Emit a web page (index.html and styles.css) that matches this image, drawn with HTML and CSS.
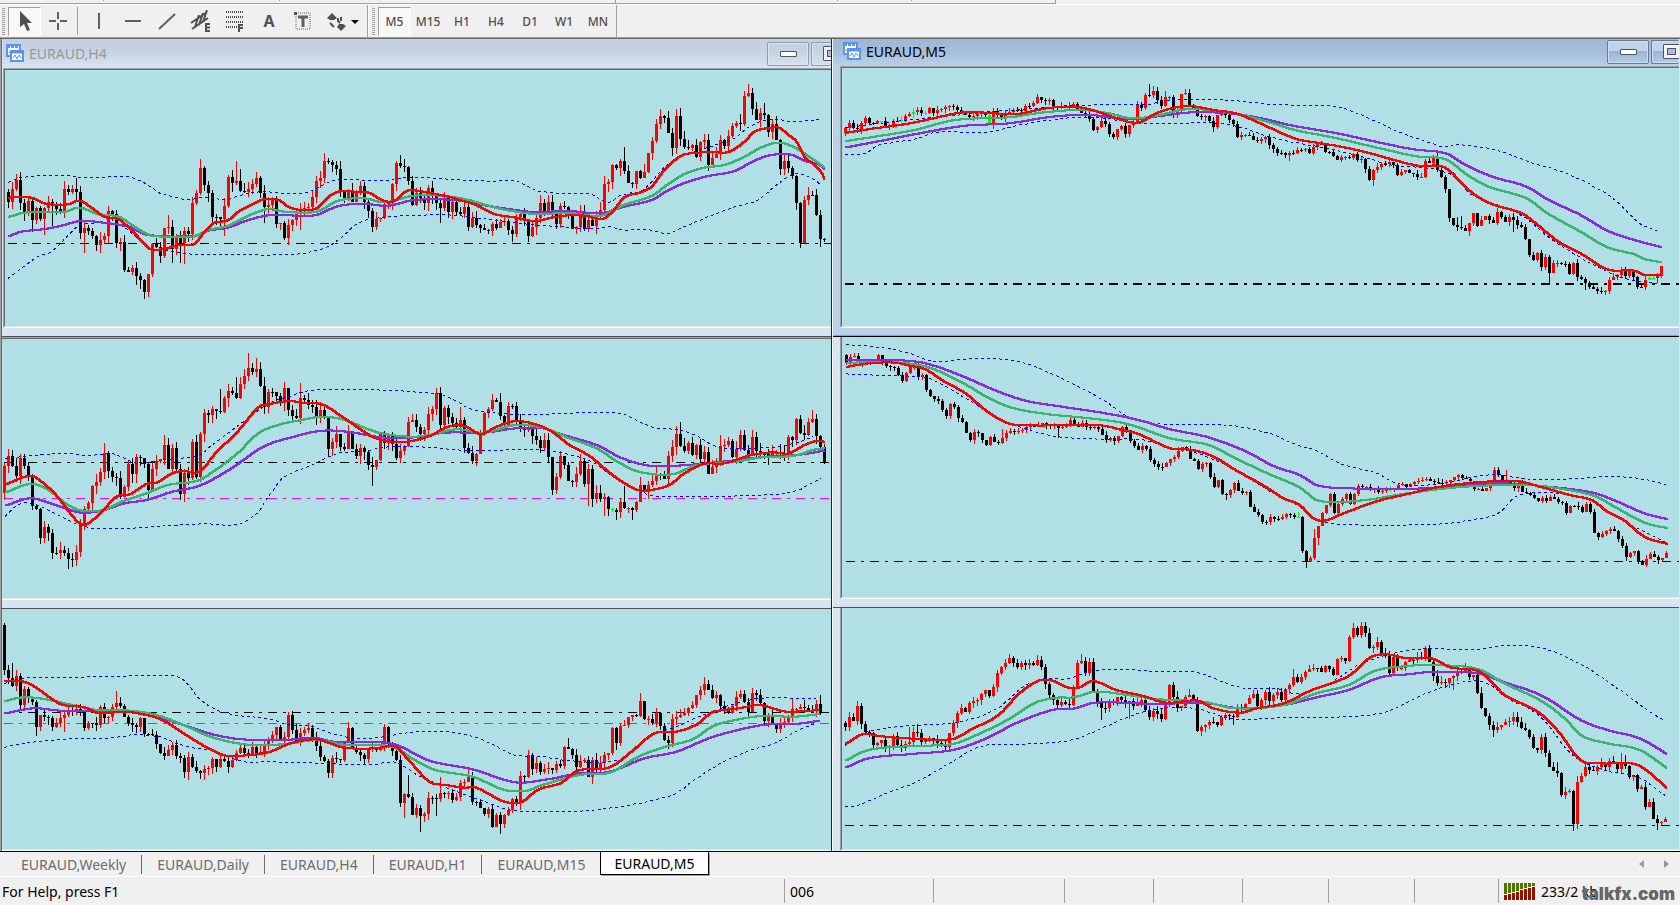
FILE: index.html
```html
<!DOCTYPE html>
<html lang="en">
<head>
    <meta charset="UTF-8">
    <meta name="viewport" content="width=device-width, initial-scale=1.0">
    <title>EURAUD,M5</title>
    <link rel="stylesheet" href="styles.css">
</head>
<body>
    <div class="strip">
        <span class="part part-a"></span>
        <span class="part part-b"></span>
        <span class="part part-c"></span>
        <span class="part part-d"></span>
        <span class="part part-e"></span>
    </div>

    <div class="toolbar">
        <div class="group">
            <span class="grip"></span>
            <button class="tool active" aria-label="Cursor">
                <svg width="20" height="20"><path d="M5 0v16l4-3 3 7 3-1-3-7h5z" fill="#505050"/></svg>
            </button>
            <button class="tool" aria-label="Crosshair">
                <svg width="20" height="20"><path d="M10 1v7M10 12v7M1 10h7M12 10h7" stroke="#606060" stroke-width="2"/></svg>
            </button>
            <span class="sep"></span>
            <button class="tool" aria-label="Vertical line">
                <svg width="20" height="20"><path d="M10 2v16" stroke="#606060" stroke-width="2"/></svg>
            </button>
            <button class="tool" aria-label="Horizontal line">
                <svg width="20" height="20"><path d="M2 10h16" stroke="#606060" stroke-width="2"/></svg>
            </button>
            <button class="tool" aria-label="Trendline">
                <svg width="20" height="20"><path d="M2 18L18 3" stroke="#606060" stroke-width="2"/></svg>
            </button>
            <button class="tool" aria-label="Equidistant channel">
                <svg width="22" height="22">
                    <path d="M1 13L17 2M2 19L18 8M5 17L9 5M9 15L13 3M13 12L17 0" stroke="#505050" stroke-width="2" fill="none"/>
                    <path d="M20 14h-4v7h4M16 17.500h4" stroke="#505050" stroke-width="2" fill="none"/>
                </svg>
            </button>
            <button class="tool" aria-label="Fibonacci retracement">
                <svg width="22" height="22">
                    <path d="M2 2h17M2 7h17M2 12h17M2 17h11" stroke="#505050" stroke-width="2" stroke-dasharray="1 1"/>
                    <path d="M19 15h-4v7M15 18h4" stroke="#505050" stroke-width="2" fill="none"/>
                </svg>
            </button>
            <button class="tool letter" aria-label="Text">A</button>
            <button class="tool" aria-label="Text label">
                <svg width="20" height="20">
                    <rect x="3" y="2" width="14" height="16" fill="none" stroke="#606060" stroke-dasharray="1 1"/>
                    <path d="M1 1h3v3H1z" fill="#505050"/>
                    <path d="M5 6h10M10 6v10" stroke="#606060" stroke-width="3"/>
                </svg>
            </button>
            <button class="tool wide" aria-label="Arrows">
                <svg width="32" height="20">
                    <path d="M5 2l5 5-3 2H3L0 7zM12 13h4l3 2-5 5-4-4z" fill="#505050"/>
                    <path d="M3 12l4 4M11 7v3l2 2M14 6v4" stroke="#505050" stroke-width="2" fill="none"/>
                    <path d="M24 9h8l-4 4z" fill="#000"/>
                </svg>
            </button>
        </div>
        <div class="group">
            <span class="grip"></span>
            <button class="tool period active">M5</button>
            <button class="tool period">M15</button>
            <button class="tool period">H1</button>
            <button class="tool period">H4</button>
            <button class="tool period">D1</button>
            <button class="tool period">W1</button>
            <button class="tool period">MN</button>
        </div>
    </div>

    <main class="workspace">
        <div class="column left">
            <section class="window titled">
                <header class="title">
                    <svg class="logo" width="19" height="19">
                        <rect x="1" y="1" width="13" height="11" fill="#fff" stroke="#5b93f5" stroke-width="2"/>
                        <path d="M1 2h14" stroke="#5b93f5" stroke-width="4" stroke-dasharray="3 1"/>
                        <path d="M3 9l2-3 2 3" stroke="#5b93f5" fill="none"/>
                        <rect x="5" y="7" width="12" height="10" fill="#fff" stroke="#5b93f5" stroke-width="2"/>
                        <path d="M4 8h14" stroke="#5b93f5" stroke-width="3"/>
                        <path d="M7 14l2-3 2 4 2-4 2 3" stroke="#5b93f5" fill="none"/>
                    </svg>
                    <span class="name">EURAUD,H4</span>
                    <button class="winbtn" aria-label="Minimize"><span class="min"></span></button>
                    <button class="winbtn cut" aria-label="Maximize"><span class="max"></span></button>
                </header>
                <div class="client"><svg class="chart" id="chart-h4"></svg></div>
            </section>
            <section class="window">
                <div class="client"><svg class="chart" id="chart-daily"></svg></div>
            </section>
            <section class="window">
                <div class="client"><svg class="chart" id="chart-weekly"></svg></div>
            </section>
        </div>
        <div class="column right">
            <section class="window titled focused">
                <header class="title">
                    <svg class="logo" width="19" height="19">
                        <rect x="1" y="1" width="13" height="11" fill="#fff" stroke="#5b93f5" stroke-width="2"/>
                        <path d="M1 2h14" stroke="#5b93f5" stroke-width="4" stroke-dasharray="3 1"/>
                        <path d="M3 9l2-3 2 3" stroke="#5b93f5" fill="none"/>
                        <rect x="5" y="7" width="12" height="10" fill="#fff" stroke="#5b93f5" stroke-width="2"/>
                        <path d="M4 8h14" stroke="#5b93f5" stroke-width="3"/>
                        <path d="M7 14l2-3 2 4 2-4 2 3" stroke="#5b93f5" fill="none"/>
                    </svg>
                    <span class="name">EURAUD,M5</span>
                    <button class="winbtn" aria-label="Minimize"><span class="min"></span></button>
                    <button class="winbtn cut" aria-label="Maximize"><span class="max"></span></button>
                </header>
                <div class="client"><svg class="chart" id="chart-m5"></svg></div>
            </section>
            <section class="window">
                <div class="client"><svg class="chart" id="chart-m15"></svg></div>
            </section>
            <section class="window">
                <div class="client"><svg class="chart" id="chart-h1"></svg></div>
            </section>
        </div>
    </main>

    <nav class="tabs">
        <button class="tab">EURAUD,Weekly</button>
        <button class="tab">EURAUD,Daily</button>
        <button class="tab">EURAUD,H4</button>
        <button class="tab">EURAUD,H1</button>
        <button class="tab">EURAUD,M15</button>
        <button class="tab current">EURAUD,M5</button>
        <span class="scroll">
            <button class="arrow" aria-label="Scroll left"><svg width="5" height="8"><path d="M5 0v8L0 4z" fill="#999"/></svg></button>
            <button class="arrow" aria-label="Scroll right"><svg width="5" height="8"><path d="M0 0v8l5-4z" fill="#999"/></svg></button>
        </span>
    </nav>

    <footer class="status">
        <span class="cell">For Help, press F1</span>
        <span class="cell">006</span>
        <span class="cell"></span>
        <span class="cell"></span>
        <span class="cell"></span>
        <span class="cell"></span>
        <span class="cell"></span>
        <span class="cell"></span>
        <span class="cell">
            <svg width="32" height="17">
                <path d="M0 0h3v11H0zM4 0h3v10H4zM8 0h3v9H8zM12 0h3v8h-3zM16 0h3v6h-3zM20 0h3v5h-3zM24 0h3v4h-3zM28 0h3v3h-3z" fill="#4f7500"/>
                <path d="M0 12h3v5H0zM4 11h3v6H4zM8 10h3v7H8zM12 9h3v8h-3zM16 7h3v10h-3zM20 6h3v11h-3zM24 5h3v12h-3zM28 4h3v13h-3z" fill="#8e1600"/>
            </svg>
            233/2 kb
        </span>
        <span class="watermark">talkfx.com</span>
    </footer>

    <script src="charts.js"></script>
</body>
</html>
```

FILE: styles.css
```css
* {
    margin: 0;
    padding: 0;
    box-sizing: border-box;
}

body {
    height: 100vh;
    display: flex;
    flex-direction: column;
    overflow: hidden;
    background: #f0f0f0;
    color: #000;
    font-family: "Noto Sans", "Open Sans", sans-serif;
    font-size: 14px;
}

button {
    border: none;
    background: none;
    font: inherit;
    color: inherit;
}

/* bottom edge of the upper toolbar */
.strip {
    height: 4px;
    width: 63%;
    max-width: 1056px;
    display: flex;
    border-right: 1px solid #a0a0a0;
    border-bottom: 1px solid #a0a0a0;
}

.part {
    height: 1px;
    border-right: 1px solid #a0a0a0;
}

.part-a { width: 104px; }
.part-b { width: 176px; }
.part-c { width: 336px; height: 3px; }
.part-d { width: 222px; }
.part-e { width: 74px; }

.toolbar {
    height: 33px;
    display: flex;
    border-top: 1px solid #fff;
}

.group {
    display: flex;
    align-items: center;
    padding: 1px 1px 1px 2px;
    border-right: 1px solid #a0a0a0;
}

.group + .group {
    border-left: 1px solid #fff;
    padding-left: 3px;
}

.grip {
    width: 3px;
    height: 27px;
    margin-right: 3px;
    background: repeating-linear-gradient(#a0a0a0 0 1px, #f0f0f0 1px 2px);
}

.tool {
    width: 34px;
    height: 29px;
    display: flex;
    align-items: center;
    justify-content: center;
    color: #505050;
}

.tool.active {
    width: 33px;
    background: #f8f8f8;
    border: 1px solid;
    border-color: #a0a0a0 #fff #fff #a0a0a0;
}

.tool.wide {
    width: 46px;
}

.letter {
    font-size: 16px;
    font-weight: 700;
}

.period {
    font-size: 12px;
    font-weight: 500;
}

.sep {
    width: 1px;
    height: 28px;
    margin: 0 4px 0 2px;
    background: #a0a0a0;
}

.workspace {
    flex: 1;
    min-height: 0;
    display: grid;
    grid-template-columns: minmax(0, 832fr) minmax(0, 848fr);
    border-top: 1px solid #a0a0a0;
    box-shadow: inset 0 1px #696969;
    padding-top: 1px;
}

.column {
    display: grid;
    min-height: 0;
}

.left {
    grid-template-rows: minmax(0, 297fr) minmax(0, 272fr) minmax(0, 243fr);
    border-left: 1px solid #a0a0a0;
    border-right: 1px solid #222;
}

.right {
    grid-template-rows: minmax(0, 298fr) minmax(0, 270fr) minmax(0, 244fr);
    border-left: 1px solid #fff;
    border-right: 1px solid #e3e3e3;
}

.window {
    display: flex;
    flex-direction: column;
    min-height: 0;
    background: #d7e4f2;
    padding-bottom: 8px;
}

.left .window {
    border-left: 1px solid #696969;
    border-top: 1px solid #505050;
}

.left .titled {
    border-top: none;
    padding-left: 1px;
}

.right .window {
    padding-left: 7px;
}

.right .window:last-child {
    border-top: 1px solid #505050;
}

.right .focused {
    background: #b9d1ea;
    padding-bottom: 8px;
    border-bottom: 1px solid #000;
    box-shadow: inset 0 -1px #35c5dc;
}

.window:last-child {
    padding-bottom: 0;
}

.title {
    height: 29px;
    display: flex;
    align-items: center;
    background: linear-gradient(#c3d0df, #c5d2e1 40%, #d7e4f2);
    color: #999;
}

.focused .title {
    height: 27px;
    margin-left: -7px;
    padding: 0 0 2px 7px;
    background: linear-gradient(#9db8d6, #a2bcda 40%, #b9d1ea);
    color: #000;
}

.logo {
    margin: 0 4px 0 3px;
}

.name {
    flex: 1;
}

.winbtn {
    width: 42px;
    height: 24px;
    margin-right: 2px;
    display: flex;
    align-items: center;
    justify-content: center;
    border: 1px solid #8a9bb8;
    border-radius: 2px;
    box-shadow: inset 0 0 0 1px #dde7f3;
}

.focused .winbtn {
    background: linear-gradient(#bfd3e9 45%, #98b4d3 45%, #b3cce7);
    border-color: #64799b;
    box-shadow: inset 0 0 0 1px #cfe0f2;
}

.winbtn.cut {
    width: 20px;
    margin-right: 0;
    justify-content: flex-start;
    padding-left: 11px;
    overflow: hidden;
    border-right: none;
}

.focused .winbtn.cut {
    width: 28px;
}

.min {
    width: 17px;
    height: 6px;
    background: #fff;
    border: 1px solid #4c5468;
    border-radius: 1px;
}

.max {
    flex: none;
    width: 17px;
    height: 15px;
    border: 1px solid #4c5468;
    border-radius: 1px;
    background: #a8bfdb;
    box-shadow: inset 0 0 0 3px #f3f3f3, inset 0 0 0 4px #4c5468;
}

/* sunken frame round each chart */
.client {
    flex: 1;
    min-height: 0;
    display: flex;
    border-bottom: 1px solid #fff;
}

.titled .client {
    border-top: 1px solid #a0a0a0;
    border-left: 1px solid #a0a0a0;
}

.right .client {
    border-left: 1px solid #a0a0a0;
}

.chart {
    flex: 1;
    width: 100%;
    min-width: 0;
    height: 100%;
    background: #b0e0e6;
    border-bottom: 1px solid #e3e3e3;
    shape-rendering: crispEdges;
}

.titled .chart {
    border-top: 1px solid #696969;
    border-left: 1px solid #696969;
}

.right .chart {
    border-left: 1px solid #696969;
}

.left .window:nth-child(2) .client {
    border-top: 1px solid #a0a0a0;
}

.left .window:nth-child(2) .chart {
    border-top: 1px solid #696969;
}

.tabs {
    height: 26px;
    display: flex;
    align-items: center;
    padding-left: 6px;
    border-top: 1px solid #000;
    border-bottom: 1px solid #fff;
    color: #6d6d6d;
}

.tab {
    height: 19px;
    line-height: 17px;
    padding: 0 15px;
    border-right: 1px solid #6d6d6d;
    white-space: nowrap;
}

.tab:nth-child(5) {
    border-right: none;
}

.tab.current {
    align-self: flex-start;
    height: 23px;
    line-height: 21px;
    padding: 0 13px;
    background: #fff;
    color: #000;
    border: 1px solid #000;
    border-top: none;
    box-shadow: 1px 1px #a0a0a0;
}

.scroll {
    margin-left: auto;
    display: flex;
    gap: 20px;
    padding-right: 11px;
}

.arrow {
    display: flex;
}

.status {
    position: relative;
    height: 28px;
    display: grid;
    grid-template-columns: 784fr 149fr 131fr 89fr 89fr 86fr 86fr 84fr 182fr;
    align-items: center;
    padding: 2px 0;
}

.cell {
    height: 24px;
    display: flex;
    align-items: center;
    gap: 5px;
    padding-left: 5px;
    border-left: 1px solid #a0a0a0;
    white-space: nowrap;
}

.cell:first-child {
    border-left: none;
    padding-left: 2px;
}

.watermark {
    position: absolute;
    right: 5px;
    bottom: 1px;
    font-family: Inter, sans-serif;
    font-size: 17px;
    font-weight: 900;
    color: #666;
}
```

FILE: charts.js
```javascript
// Each series is a flat list: x, y, x, y ...
// dx/dy move the series into the chart, sx is units per pixel.
const STEP = 4;

const COLORS = {
    up: '#ff0000',
    down: '#000000',
    doji: '#00ff00',
    red: '#ff0000',
    green: '#3cb371',
    purple: '#8a2be2',
    band: '#0000ff'
};

const charts = [
    {
        id: 'chart-h4', sx: 3, dx: 5, dy: 10, first: 3, wick: 26, open: 395,
        levels: [[550, '#000', 1]],
        candles: [
            25,425, 37,388, 49,360, 61,430, 73,458, 85,423, 97,480, 109,445, 121,478, 133,443, 145,427, 157,437, 169,448, 181,456,
            193,388, 205,395, 217,388, 229,397, 241,518, 253,503, 265,513, 277,528, 289,555, 301,541, 313,529, 325,453, 337,462,
            349,550, 361,546, 373,630, 385,635, 397,624, 409,648, 421,661, 433,696, 445,642, 457,552, 469,562, 481,588, 493,504,
            505,500, 517,566, 529,532, 541,550, 553,513, 565,522, 577,430, 589,400, 601,324, 613,376, 625,400, 637,470, 649,472,
            661,478, 673,438, 685,352, 697,370, 709,363, 721,392, 733,396, 745,387, 757,373, 769,354, 781,398, 793,440, 805,436,
            817,421, 829,491, 841,490, 853,533, 865,495, 877,480, 889,460, 901,450, 913,445, 925,440, 937,411, 949,363, 961,354,
            973,303, 985,306, 997,315, 1009,326, 1021,395, 1033,417, 1045,396, 1057,425, 1069,396, 1081,378, 1093,425, 1105,452,
            1117,500, 1129,478, 1141,474, 1153,432, 1165,430, 1177,373, 1189,310, 1201,318, 1213,322, 1225,362, 1237,435,
            1249,400, 1261,415, 1273,430, 1285,385, 1297,408, 1309,428, 1321,443, 1333,415, 1345,457, 1357,425, 1369,455,
            1381,462, 1393,441, 1405,500, 1417,473, 1429,494, 1441,503, 1453,510, 1465,514, 1477,491, 1489,503, 1501,485,
            1513,482, 1525,510, 1537,522, 1549,470, 1561,462, 1573,482, 1585,527, 1597,500, 1609,473, 1621,428, 1633,452,
            1645,426, 1657,450, 1669,492, 1681,438, 1693,440, 1705,464, 1717,507, 1729,502, 1741,457, 1753,507, 1765,480,
            1777,498, 1789,465, 1801,450, 1813,373, 1825,367, 1837,315, 1849,324, 1861,303, 1873,333, 1885,368, 1897,372,
            1909,333, 1921,353, 1933,336, 1945,280, 1957,243, 1969,193, 1981,168, 1993,173, 2005,218, 2017,264, 2029,168,
            2041,236, 2053,262, 2065,264, 2077,255, 2089,290, 2101,246, 2113,240, 2125,315, 2137,293, 2149,281, 2161,240,
            2173,258, 2185,228, 2197,198, 2209,188, 2221,193, 2233,108, 2245,99, 2257,147, 2269,179, 2281,158, 2293,166,
            2305,215, 2317,192, 2329,240, 2341,327, 2353,303, 2365,324, 2377,347, 2389,428, 2401,549, 2413,420, 2425,405,
            2437,405, 2449,464, 2461,537, 2473,537
        ],
        spikes: [97,515, 133,525, 157,503, 253,580, 229,355, 445,710, 505,465, 517,608, 541,608, 553,612, 601,297, 673,528, 709,303, 721,328, 793,488, 901,510, 1201,286, 1321,490, 1537,545, 1873,262, 1981,153, 2005,153, 2041,147, 2245,72, 2293,130, 2401,563],
        lines: {
            purple: [25,528, 60,515, 130,507, 180,497, 240,483, 320,490, 380,500, 440,525, 580,527, 620,512, 680,502, 740,480, 810,465, 940,466, 1010,438, 1090,432, 1160,437, 1240,420, 1360,420, 1430,433, 1520,447, 1600,456, 1700,453, 1800,460, 1860,442, 1950,420, 2000,390, 2060,365, 2120,348, 2200,333, 2260,302, 2310,285, 2370,284, 2410,302, 2450,313, 2473,330],
            green: [25,470, 70,458, 130,455, 190,455, 235,443, 290,463, 350,470, 400,500, 445,525, 500,530, 575,530, 620,510, 680,497, 740,467, 800,447, 850,455, 945,455, 1010,422, 1090,415, 1150,427, 1240,407, 1330,408, 1400,420, 1490,445, 1600,462, 1700,459, 1800,467, 1860,437, 1950,408, 2000,372, 2050,342, 2110,323, 2170,315, 2230,290, 2280,262, 2330,248, 2380,262, 2430,295, 2473,324],
            red: [25,413, 60,410, 95,415, 130,430, 170,434, 205,432, 235,422, 270,443, 310,470, 350,478, 385,505, 420,542, 445,566, 490,567, 530,555, 575,553, 605,520, 635,490, 680,480, 710,455, 750,435, 790,417, 830,420, 865,442, 900,450, 945,445, 985,408, 1020,393, 1060,395, 1100,398, 1145,422, 1180,422, 1215,393, 1240,391, 1290,400, 1340,410, 1380,422, 1420,433, 1480,462, 1540,472, 1600,483, 1650,473, 1700,466, 1750,467, 1800,477, 1830,458, 1870,412, 1915,398, 1950,380, 1990,330, 2040,287, 2090,278, 2130,276, 2180,276, 2230,245, 2260,215, 2300,204, 2335,204, 2360,225, 2385,245, 2410,290, 2440,315, 2460,338, 2473,364]
        },
        bands: [
            [25,366, 70,350, 170,344, 260,352, 385,349, 440,372, 480,398, 560,417, 620,410, 670,418, 740,400, 790,393, 860,400, 930,393, 1000,360, 1160,360, 1220,350, 1380,358, 1480,362, 1550,362, 1610,390, 1700,400, 1775,402, 1820,426, 1870,402, 1930,388, 1990,325, 2040,290, 2110,265, 2200,235, 2260,192, 2320,176, 2380,183, 2473,175],
            [25,655, 110,590, 160,570, 230,498, 250,490, 350,490, 400,520, 440,560, 490,568, 560,580, 650,582, 870,582, 960,568, 1020,535, 1070,490, 1150,470, 1250,465, 1330,462, 1450,475, 1530,485, 1600,493, 1680,498, 1790,505, 1830,498, 1860,508, 1940,508, 2000,518, 2050,500, 2200,440, 2270,420, 2340,365, 2385,340, 2440,355, 2473,384]
        ]
    },
    {
        id: 'chart-daily', sx: 1.867, dx: 2, dy: 9, first: 2, wick: 26, open: 490,
        levels: [[397, '#000', 1], [505, '#ff00ff', 1]],
        candles: [
            9,408, 17,378, 24,408, 32,437, 39,385, 47,408, 54,438, 62,527, 70,536, 77,624, 84,592, 91,608, 99,670, 107,670, 113,660,
            121,668, 128,688, 135,690, 143,665, 150,588, 158,536, 165,520, 172,468, 180,456, 187,426, 195,368, 202,423, 210,442,
            218,445, 225,500, 232,472, 240,402, 247,432, 255,380, 262,385, 270,402, 277,480, 285,418, 292,392, 300,388, 307,345,
            314,416, 322,354, 330,416, 337,492, 345,430, 352,445, 360,336, 367,440, 374,312, 382,250, 390,256, 397,238, 404,244,
            412,245, 419,205, 427,184, 434,190, 442,205, 449,162, 456,138, 464,115, 471,125, 479,118, 487,168, 494,232, 501,187,
            509,187, 516,198, 524,220, 531,175, 539,240, 546,258, 553,264, 561,205, 568,210, 576,225, 583,232, 591,264, 598,240,
            606,262, 613,358, 620,336, 628,312, 636,350, 643,356, 650,310, 658,358, 665,378, 673,355, 681,366, 688,404, 695,412,
            703,390, 710,312, 718,340, 725,312, 733,342, 740,384, 748,362, 755,348, 762,275, 770,270, 777,292, 785,312, 792,300,
            800,252, 807,238, 815,190, 822,286, 830,235, 837,262, 845,280, 852,292, 860,270, 867,354, 874,368, 882,392, 890,372,
            897,310, 904,250, 912,236, 919,210, 926,215, 934,258, 942,285, 949,228, 957,228, 964,270, 971,290, 979,300, 986,298,
            994,318, 1001,330, 1009,355, 1016,330, 1024,380, 1031,480, 1039,440, 1046,378, 1054,404, 1061,452, 1069,455, 1076,432,
            1084,394, 1091,462, 1098,416, 1106,508, 1113,490, 1121,508, 1128,500, 1136,538, 1143,540, 1150,545, 1158,515,
            1166,535, 1173,533, 1181,540, 1188,515, 1195,466, 1203,486, 1210,465, 1218,452, 1225,432, 1233,434, 1240,446,
            1247,378, 1255,352, 1263,312, 1270,348, 1277,362, 1285,338, 1292,375, 1300,345, 1308,388, 1315,366, 1322,432,
            1330,410, 1337,398, 1345,348, 1352,345, 1360,332, 1367,380, 1375,358, 1382,315, 1390,360, 1398,376, 1405,320,
            1412,362, 1420,372, 1428,372, 1435,382, 1443,368, 1450,365, 1458,370, 1465,378, 1472,320, 1480,330, 1487,268,
            1494,310, 1502,316, 1509,276, 1517,268, 1524,318, 1532,352, 1539,400
        ],
        spikes: [24,360, 128,716, 195,340, 277,512, 307,316, 412,178, 442,142, 464,69, 479,84, 561,160, 695,467, 815,186, 860,232, 919,192, 934,190, 1098,528, 1128,557, 1158,563, 1166,468, 1181,570, 1270,277, 1345,315, 1517,240],
        doji: [1143],
        lines: {
            purple: [9,526, 55,505, 100,525, 150,548, 190,540, 230,520, 270,510, 320,485, 370,467, 430,415, 490,350, 550,318, 600,302, 650,306, 700,320, 750,325, 830,308, 900,308, 960,295, 1010,295, 1050,315, 1110,345, 1160,385, 1210,407, 1260,407, 1330,398, 1430,380, 1490,374, 1539,361],
            green: [9,486, 55,462, 85,478, 120,520, 150,542, 190,540, 230,512, 270,490, 310,465, 365,452, 400,420, 440,370, 480,310, 520,283, 560,270, 600,260, 640,270, 700,306, 760,320, 800,315, 850,298, 900,308, 960,285, 1010,293, 1060,325, 1110,355, 1150,395, 1190,425, 1250,433, 1300,405, 1370,395, 1420,382, 1480,377, 1520,358, 1539,355],
            red: [9,462, 55,437, 75,455, 105,500, 135,562, 150,583, 162,580, 190,540, 215,500, 240,492, 270,462, 290,458, 320,430, 340,423, 370,425, 400,370, 440,305, 480,232, 500,222, 540,213, 560,218, 600,224, 640,265, 700,325, 755,335, 800,318, 835,290, 865,288, 895,312, 925,290, 960,273, 1000,285, 1030,308, 1060,345, 1100,380, 1140,435, 1180,475, 1200,482, 1245,466, 1275,430, 1310,402, 1350,400, 1400,375, 1440,367, 1470,370, 1500,345, 1524,332, 1539,336]
        },
        bands: [
            [9,384, 60,375, 130,368, 160,376, 210,370, 235,385, 255,398, 320,385, 370,375, 400,340, 450,280, 500,220, 540,198, 580,180, 620,178, 700,178, 780,185, 830,195, 880,235, 920,247, 980,253, 1090,247, 1160,250, 1220,290, 1270,298, 1300,315, 1340,350, 1420,352, 1470,344, 1500,330, 1525,312],
            [9,558, 40,518, 75,528, 110,555, 160,590, 230,594, 310,586, 380,580, 440,582, 480,550, 500,500, 530,440, 580,405, 630,370, 680,362, 720,350, 800,350, 870,360, 1020,360, 1100,390, 1150,445, 1200,488, 1230,498, 1400,495, 1480,484, 1515,460, 1539,438]
        ]
    },
    {
        id: 'chart-weekly', sx: 1.867, dx: 2, dy: 9, first: 2, wick: 20, open: 75,
        levels: [[337, '#000', 1], [370, '#ff00ff', 1]],
        candles: [
            7,210, 14,235, 21,258, 29,228, 36,315, 44,268, 51,295, 59,306, 66,380, 74,345, 81,352, 89,355, 96,380, 103,368, 111,355,
            118,345, 126,330, 133,332, 141,326, 148,335, 156,385, 163,370, 170,370, 178,375, 186,322, 193,353, 201,352, 208,322,
            215,308, 223,318, 230,352, 238,370, 245,375, 253,380, 260,355, 268,402, 275,402, 283,405, 290,433, 297,458, 305,468,
            312,450, 320,434, 327,468, 335,475, 342,515, 350,470, 357,500, 364,514, 372,520, 380,506, 387,505, 395,478, 402,500,
            409,476, 417,482, 424,500, 432,480, 439,460, 447,445, 454,458, 462,462, 469,440, 477,460, 484,455, 491,437, 499,420,
            506,405, 514,382, 521,416, 529,410, 536,345, 544,390, 551,425, 558,400, 566,390, 573,385, 581,412, 588,438, 596,472,
            603,482, 611,518, 618,475, 626,476, 633,480, 641,430, 648,385, 656,448, 663,455, 671,465, 678,478, 685,448, 693,444,
            700,450, 708,442, 715,382, 723,430, 730,452, 738,480, 745,610, 753,583, 760,592, 768,645, 775,625, 783,648, 790,642,
            798,594, 805,594, 812,598, 820,580, 828,582, 835,580, 842,600, 850,592, 857,550, 865,545, 872,530, 880,605, 887,606,
            895,625, 902,643, 910,626, 917,680, 924,645, 932,672, 940,645, 947,630, 954,598, 962,610, 969,528, 977,532, 984,465,
            992,506, 999,490, 1007,515, 1014,508, 1022,503, 1029,510, 1036,492, 1044,498, 1051,440, 1059,446, 1067,465, 1074,500,
            1082,482, 1089,480, 1096,532, 1104,480, 1111,508, 1119,488, 1126,465, 1134,460, 1141,385, 1148,430, 1156,378,
            1163,374, 1171,352, 1178,345, 1186,348, 1193,302, 1201,358, 1208,356, 1216,370, 1223,340, 1230,378, 1238,420,
            1246,428, 1253,358, 1260,350, 1268,345, 1275,340, 1283,325, 1290,315, 1298,285, 1305,270, 1313,252, 1320,270,
            1328,295, 1335,284, 1343,318, 1350,328, 1358,338, 1365,318, 1372,292, 1380,282, 1387,305, 1395,335, 1402,280,
            1410,286, 1417,308, 1425,362, 1432,350, 1440,372, 1447,386, 1455,372, 1462,366, 1470,350, 1477,328, 1485,326,
            1492,320, 1500,325, 1507,330, 1515,332, 1522,312, 1530,338
        ],
        spikes: [21,190, 66,408, 118,396, 215,273, 350,540, 372,536, 536,337, 573,372, 715,372, 753,654, 760,525, 783,696, 812,648, 820,530, 872,508, 932,702, 969,630, 1059,414, 1193,280, 1313,232, 1477,298, 1530,286],
        lines: {
            purple: [7,340, 60,325, 110,332, 240,335, 300,355, 350,380, 400,405, 450,418, 530,420, 580,413, 620,425, 730,432, 800,482, 880,508, 960,547, 1020,538, 1080,520, 1135,515, 1200,475, 1260,455, 1330,410, 1420,375, 1480,372, 1530,362],
            green: [7,303, 40,292, 80,297, 140,318, 180,330, 240,332, 290,345, 340,375, 390,410, 440,430, 490,436, 540,430, 590,420, 640,435, 730,440, 770,478, 810,510, 880,530, 940,570, 980,572, 1010,555, 1080,525, 1135,518, 1190,470, 1240,440, 1290,418, 1330,378, 1370,360, 1420,348, 1480,350, 1530,342],
            red: [7,243, 35,243, 60,258, 110,312, 155,322, 180,338, 230,335, 270,345, 300,360, 340,400, 380,440, 415,465, 435,468, 495,458, 540,430, 580,418, 600,422, 640,443, 700,445, 735,440, 760,480, 800,545, 830,555, 865,563, 885,562, 940,605, 970,606, 1000,570, 1045,548, 1075,512, 1135,502, 1180,450, 1220,400, 1260,395, 1300,372, 1325,338, 1350,330, 1380,324, 1415,315, 1440,325, 1465,335, 1530,330]
        },
        bands: [
            [7,248, 45,233, 150,230, 220,227, 330,227, 350,250, 375,300, 420,337, 500,355, 540,372, 580,376, 620,400, 670,415, 700,412, 740,402, 800,392, 870,402, 920,432, 960,463, 1010,468, 1060,480, 1120,485, 1160,475, 1210,410, 1260,380, 1310,345, 1370,310, 1420,293, 1530,295],
            [7,440, 60,425, 130,415, 210,412, 250,403, 300,410, 340,435, 400,452, 450,482, 500,484, 570,486, 620,490, 700,492, 740,485, 780,525, 840,565, 900,600, 960,630, 1080,632, 1130,625, 1200,606, 1260,580, 1300,535, 1350,485, 1400,450, 1450,425, 1490,390, 1530,365]
        ]
    },
    {
        id: 'chart-m5', sx: 1.8555, dx: 7, dy: 8, first: 3, wick: 13, open: 218,
        levels: [[671, '#000', 2]],
        candles: [
            18,204, 25,190, 32,205, 40,208, 47,190, 54,175, 62,188, 70,188, 77,183, 84,182, 92,198, 100,195, 107,182, 114,184,
            122,180, 130,168, 137,162, 144,155, 152,150, 159,160, 167,158, 174,144, 181,158, 189,150, 196,148, 204,142, 211,138,
            218,142, 226,150, 233,160, 241,165, 248,170, 255,168, 263,162, 270,160, 278,164, 285,188, 292,152, 300,165, 307,178,
            315,162, 322,155, 330,150, 337,150, 345,152, 352,138, 359,138, 367,128, 374,112, 382,120, 389,122, 396,120, 404,138,
            411,142, 419,138, 426,140, 434,138, 441,132, 449,148, 456,158, 464,165, 471,178, 478,210, 486,202, 493,182, 501,192,
            508,222, 515,230, 523,208, 530,198, 538,222, 545,195, 553,188, 560,135, 567,145, 575,105, 582,105, 590,92, 597,120,
            605,138, 612,112, 620,110, 627,165, 634,152, 642,102, 650,100, 657,135, 664,145, 672,168, 679,170, 687,168, 694,182,
            701,202, 709,165, 716,155, 724,165, 731,180, 738,192, 746,232, 753,225, 761,224, 768,228, 776,240, 783,242, 790,238,
            798,232, 805,255, 813,268, 820,278, 828,280, 835,285, 842,278, 850,280, 857,270, 865,270, 872,268, 880,280, 887,262,
            894,248, 902,255, 909,275, 917,275, 924,288, 932,300, 939,292, 946,290, 954,295, 961,282, 969,300, 976,296, 984,328,
            991,360, 999,330, 1006,322, 1014,312, 1021,312, 1028,305, 1036,315, 1043,344, 1050,335, 1058,330, 1065,340, 1073,342,
            1080,352, 1088,350, 1095,302, 1102,310, 1110,292, 1117,330, 1125,350, 1132,388, 1140,475, 1147,496, 1155,502,
            1162,504, 1170,512, 1177,490, 1184,460, 1192,498, 1199,480, 1206,468, 1214,480, 1222,488, 1229,455, 1236,470,
            1244,485, 1251,470, 1259,480, 1266,496, 1274,502, 1281,538, 1289,585, 1296,600, 1303,578, 1311,622, 1318,592,
            1326,638, 1333,610, 1341,608, 1348,612, 1355,612, 1363,642, 1370,610, 1378,652, 1385,658, 1392,670, 1400,680,
            1407,688, 1415,692, 1422,695, 1430,692, 1437,660, 1444,650, 1452,645, 1459,632, 1467,648, 1474,630, 1482,650,
            1489,680, 1497,682, 1504,660, 1511,655, 1519,655, 1526,648, 1533,618
        ],
        spikes: [292,207, 582,72, 590,78, 612,92, 650,88, 701,215, 842,302, 999,377, 1155,470, 1162,468, 1177,527, 1259,515, 1326,670, 1392,690, 1430,704],
        doji: [84, 122, 144, 167, 285, 1511, 1519],
        lines: {
            purple: [18,262, 100,237, 170,215, 240,197, 320,190, 400,170, 470,165, 550,178, 600,168, 660,157, 730,160, 780,172, 850,198, 930,220, 1000,245, 1070,268, 1130,280, 1170,318, 1220,352, 1280,380, 1320,418, 1380,465, 1430,512, 1480,540, 1533,562],
            green: [18,243, 90,225, 150,208, 210,183, 260,175, 320,172, 380,158, 450,150, 500,158, 550,175, 600,165, 650,148, 730,157, 800,185, 850,210, 920,232, 1000,262, 1080,290, 1130,298, 1170,345, 1210,380, 1280,415, 1320,460, 1380,515, 1430,562, 1480,583, 1500,597, 1533,607],
            red: [18,218, 70,205, 130,192, 180,175, 230,158, 280,158, 330,163, 390,145, 440,140, 480,153, 520,175, 560,188, 595,158, 650,138, 700,150, 740,160, 780,185, 850,235, 890,248, 930,258, 990,280, 1040,302, 1080,317, 1120,318, 1140,335, 1165,378, 1190,410, 1220,435, 1270,458, 1290,480, 1340,545, 1380,580, 1430,628, 1480,632, 1500,645, 1533,645]
        },
        bands: [
            [18,202, 100,185, 200,168, 280,155, 360,145, 440,135, 520,133, 580,132, 620,120, 680,118, 740,120, 800,130, 870,135, 930,138, 980,165, 1040,210, 1100,245, 1130,258, 1160,253, 1230,270, 1290,305, 1350,335, 1400,372, 1450,420, 1490,485, 1533,515],
            [18,283, 55,278, 80,255, 150,235, 190,215, 280,215, 340,195, 400,178, 480,170, 560,188, 640,188, 700,187, 740,195, 800,225, 860,248, 930,268, 980,290, 1040,315, 1110,325, 1150,350, 1180,402, 1270,460, 1340,548, 1430,632, 1470,655, 1533,670]
        ]
    },
    {
        id: 'chart-m15', sx: 1.8555, dx: 7, dy: 7, first: 4, wick: 11, open: 75,
        levels: [[693, '#000', 1]],
        candles: [
            20,98, 27,80, 34,78, 42,92, 49,100, 57,95, 64,98, 72,90, 79,75, 86,98, 94,108, 101,112, 109,115, 116,135, 124,152,
            131,130, 138,112, 146,102, 153,142, 161,136, 168,180, 176,198, 183,208, 190,212, 198,240, 205,258, 213,222, 220,230,
            228,265, 235,275, 242,310, 250,330, 257,305, 265,310, 272,330, 280,344, 287,320, 295,336, 302,338, 309,325, 317,310,
            324,302, 332,306, 339,302, 347,300, 354,292, 362,288, 369,290, 377,285, 384,280, 391,286, 399,286, 406,284, 414,295,
            421,292, 428,282, 436,270, 443,282, 451,290, 458,280, 466,292, 473,292, 480,290, 488,298, 495,315, 503,330, 510,325,
            517,332, 525,318, 532,290, 540,300, 547,332, 554,348, 562,360, 569,348, 577,358, 584,390, 592,402, 599,410, 607,410,
            614,400, 621,388, 629,380, 636,362, 643,352, 651,360, 658,388, 666,394, 673,416, 681,402, 688,398, 696,440, 703,470,
            710,450, 718,492, 725,496, 733,480, 740,458, 748,482, 755,488, 762,486, 770,530, 777,545, 785,556, 792,575, 800,576,
            807,562, 815,566, 822,566, 829,560, 837,552, 844,555, 852,562, 859,562, 866,664, 874,695, 881,684, 889,625, 896,588,
            904,550, 911,525, 918,492, 926,550, 933,522, 941,506, 948,492, 956,522, 963,492, 970,468, 978,472, 985,470, 993,480,
            1000,478, 1008,486, 1015,484, 1023,480, 1030,478, 1037,475, 1045,464, 1052,462, 1060,472, 1067,462, 1075,455,
            1082,452, 1089,450, 1097,446, 1104,452, 1111,455, 1119,458, 1127,460, 1134,455, 1141,450, 1149,442, 1156,435,
            1164,445, 1171,446, 1179,452, 1186,478, 1193,476, 1201,482, 1208,475, 1216,460, 1223,420, 1230,435, 1238,458,
            1245,455, 1253,458, 1260,475, 1268,460, 1275,485, 1283,488, 1290,495, 1298,505, 1305,512, 1312,504, 1320,512,
            1327,500, 1335,508, 1342,515, 1350,520, 1357,548, 1364,528, 1372,528, 1379,532, 1387,545, 1394,522, 1401,545,
            1409,610, 1416,620, 1424,612, 1431,602, 1439,598, 1446,602, 1453,628, 1461,648, 1469,680, 1476,668, 1483,662,
            1491,695, 1498,704, 1506,686, 1513,672, 1520,680, 1528,690, 1535,684, 1543,668
        ],
        spikes: [309,297, 414,323, 517,345, 607,422, 725,510, 859,546, 874,713, 889,597, 896,645, 1223,411, 1245,420, 1469,692, 1506,710],
        doji: [859, 1030],
        lines: {
            purple: [20,90, 100,90, 160,98, 220,130, 300,185, 350,212, 410,228, 500,250, 560,270, 620,298, 690,322, 760,365, 810,408, 860,435, 895,467, 970,476, 1060,477, 1150,468, 1230,460, 1300,467, 1400,487, 1450,515, 1500,550, 1543,568],
            green: [20,98, 110,97, 170,112, 230,155, 290,210, 330,235, 390,252, 470,265, 540,282, 620,325, 690,345, 740,385, 800,430, 860,472, 895,512, 970,512, 1060,490, 1150,472, 1240,465, 1300,467, 1400,495, 1450,535, 1500,578, 1543,595],
            red: [20,110, 60,100, 110,98, 140,108, 165,118, 200,155, 240,190, 280,245, 320,280, 360,286, 420,286, 490,286, 530,300, 560,312, 620,355, 660,360, 700,380, 740,420, 790,465, 830,505, 860,525, 885,565, 905,572, 940,550, 1000,515, 1060,492, 1120,470, 1190,457, 1260,453, 1310,472, 1360,495, 1400,510, 1430,545, 1460,570, 1500,620, 1543,643]
        },
        bands: [
            [20,42, 80,50, 140,68, 180,92, 250,85, 310,86, 360,102, 430,152, 500,210, 540,255, 600,280, 720,283, 800,305, 860,345, 890,358, 940,402, 1000,425, 1050,462, 1120,460, 1190,438, 1230,432, 1280,445, 1350,446, 1440,438, 1500,446, 1543,463],
            [20,130, 90,135, 170,142, 210,172, 270,232, 310,272, 360,298, 410,318, 490,326, 570,328, 620,352, 660,362, 740,415, 800,475, 860,525, 900,570, 960,583, 1130,580, 1180,568, 1230,550, 1260,502, 1290,488, 1340,488, 1400,508, 1460,568, 1543,638]
        ]
    },
    {
        id: 'chart-h1', sx: 1.8555, dx: 7, dy: 8, first: 3, wick: 17, open: 370,
        levels: [[676, '#000', 1]],
        candles: [
            18,380, 25,350, 33,362, 40,318, 48,372, 55,395, 62,400, 70,435, 77,430, 85,420, 92,445, 99,440, 107,408, 114,435, 122,445,
            129,432, 137,425, 144,395, 151,400, 159,425, 166,420, 174,415, 181,422, 189,430, 196,432, 204,442, 211,400, 218,368,
            226,340, 233,325, 241,335, 248,308, 256,302, 263,300, 270,282, 278,270, 285,288, 293,262, 300,220, 307,200, 315,190,
            322,175, 330,188, 337,200, 344,190, 352,195, 360,190, 367,195, 374,180, 382,200, 389,252, 397,285, 404,300, 411,315,
            419,306, 426,312, 434,315, 441,262, 448,190, 456,184, 463,218, 471,185, 478,272, 486,310, 493,325, 501,325, 508,305,
            515,305, 523,292, 530,300, 538,308, 545,304, 552,318, 560,308, 567,300, 575,330, 582,352, 590,333, 597,342, 605,357,
            612,308, 620,255, 627,290, 634,325, 642,318, 649,292, 656,285, 664,300, 671,392, 679,382, 686,376, 693,366, 701,366,
            708,375, 716,350, 723,345, 731,348, 738,350, 746,325, 753,330, 760,312, 768,295, 775,282, 783,318, 790,300, 798,276,
            805,302, 812,285, 820,275, 828,300, 835,268, 842,255, 850,232, 857,245, 865,230, 872,215, 880,206, 887,205, 894,205,
            902,215, 909,198, 917,208, 924,224, 931,178, 939,175, 946,182, 954,112, 961,85, 969,104, 976,78, 984,98, 991,144,
            999,140, 1006,126, 1014,158, 1021,168, 1028,218, 1036,170, 1043,205, 1051,204, 1058,185, 1066,180, 1073,180, 1080,170,
            1088,175, 1095,145, 1102,185, 1110,228, 1117,250, 1124,245, 1132,250, 1139,235, 1147,228, 1155,212, 1162,215,
            1169,202, 1177,230, 1184,225, 1192,278, 1199,325, 1207,348, 1214,375, 1222,390, 1229,380, 1236,375, 1244,365,
            1251,362, 1259,350, 1266,365, 1273,385, 1281,390, 1288,412, 1296,445, 1303,450, 1311,412, 1318,460, 1326,500,
            1333,512, 1340,518, 1348,585, 1355,575, 1363,574, 1370,672, 1377,546, 1385,528, 1392,502, 1400,510, 1407,512,
            1415,502, 1422,490, 1430,500, 1437,484, 1444,490, 1452,508, 1459,488, 1467,498, 1474,530, 1482,525, 1489,566,
            1497,562, 1504,620, 1511,606, 1519,656, 1526,670, 1533,665, 1541,658
        ],
        spikes: [99,468, 137,380, 151,373, 382,168, 456,162, 493,360, 545,358, 679,405, 738,375, 850,207, 961,69, 984,66, 1102,138, 1147,270, 1222,410, 1340,485, 1370,692, 1459,459, 1467,466, 1526,690],
        lines: {
            purple: [18,502, 60,475, 140,462, 215,450, 270,420, 340,365, 400,330, 440,326, 480,308, 600,312, 680,308, 750,325, 830,315, 890,292, 950,270, 1010,232, 1060,223, 1110,215, 1190,220, 1240,247, 1310,288, 1380,360, 1430,390, 1490,415, 1541,463],
            green: [18,480, 60,450, 140,438, 215,432, 260,405, 320,358, 370,308, 410,293, 440,292, 480,275, 540,285, 600,298, 680,305, 740,325, 830,315, 890,280, 950,255, 1000,212, 1060,198, 1110,195, 1190,207, 1240,250, 1310,305, 1350,355, 1385,408, 1430,430, 1490,450, 1541,505],
            red: [18,430, 50,402, 80,408, 130,415, 215,417, 250,388, 300,345, 340,280, 375,242, 400,242, 430,263, 450,262, 475,243, 520,270, 570,288, 610,308, 670,302, 700,325, 750,338, 780,325, 830,310, 880,272, 950,228, 990,172, 1020,163, 1060,175, 1105,176, 1140,202, 1190,212, 1215,245, 1240,285, 1300,335, 1340,395, 1380,480, 1420,490, 1480,492, 1510,520, 1541,568]
        },
        bands: [
            [18,435, 50,400, 120,378, 230,365, 300,325, 350,258, 390,235, 430,235, 480,210, 550,208, 600,214, 670,214, 720,245, 760,264, 820,265, 860,280, 920,245, 970,195, 1030,160, 1100,145, 1190,148, 1240,136, 1310,142, 1380,188, 1440,250, 1500,320, 1541,365],
            [18,618, 40,615, 100,575, 150,545, 220,480, 270,437, 340,432, 440,418, 500,380, 560,340, 620,322, 670,325, 740,355, 830,352, 930,350, 1020,335, 1080,290, 1130,260, 1200,243, 1250,295, 1310,350, 1370,465, 1430,510, 1490,530, 1541,588]
        ]
    }
];

function add(svg, tag, attrs) {
    const el = document.createElementNS('http://www.w3.org/2000/svg', tag);
    Object.keys(attrs).forEach(key => el.setAttribute(key, attrs[key]));
    svg.appendChild(el);
}

// repeatable 0..1 value for the shadow lengths
function rand(n) {
    const v = Math.sin(n * 127.1) * 43758.5453;
    return v - Math.floor(v);
}

// smooth curve through the points, one y per pixel column
function columns(pts) {
    const slope = i => {
        const a = pts[Math.max(0, i - 1)];
        const b = pts[Math.min(pts.length - 1, i + 1)];
        return (b[1] - a[1]) / (b[0] - a[0]);
    };
    const out = [];
    for (let i = 0; i < pts.length - 1; i++) {
        const [x0, y0] = pts[i];
        const [x1, y1] = pts[i + 1];
        const w = x1 - x0;
        for (let x = x0; x < x1; x++) {
            const t = (x - x0) / w;
            const u = 1 - t;
            const y = y0 * (1 + 2 * t) * u * u + y1 * t * t * (3 - 2 * t)
                + w * (slope(i) * t * u * u - slope(i + 1) * t * t * u);
            out.push([x, Math.round(y)]);
        }
    }
    return out;
}

function drawChart(c) {
    const svg = document.getElementById(c.id);
    const px = x => x / c.sx - c.dx;
    const py = y => Math.round(y / 3 - c.dy);
    const slot = x => Math.round((px(x) - c.first) / STEP);

    c.levels.forEach(([y, color, width]) => {
        const top = py(y) + (width === 1 ? 0.5 : 0);
        add(svg, 'line', {
            x1: c.first, x2: '100%', y1: top, y2: top,
            stroke: color, 'stroke-width': width, 'stroke-dasharray': '9 6 3 6'
        });
    });

    const closes = [];
    for (let i = 0; i < c.candles.length; i += 2) {
        closes[slot(c.candles[i])] = c.candles[i + 1];
    }
    const spikes = {};
    for (let i = 0; i < c.spikes.length; i += 2) {
        spikes[slot(c.spikes[i])] = c.spikes[i + 1];
    }
    const dojis = (c.doji || []).map(slot);

    const paths = { up: '', down: '', doji: '' };
    let open = c.open;
    for (let i = 0; i < closes.length; i++) {
        if (closes[i] === undefined) {
            closes[i] = open;
        }
        const close = closes[i];
        let high = Math.min(open, close) - rand(i + 1) * c.wick;
        let low = Math.max(open, close) + rand(i + 400) * c.wick;
        if (spikes[i] !== undefined) {
            high = Math.min(high, spikes[i]);
            low = Math.max(low, spikes[i]);
        }
        const x = c.first + i * STEP;
        const top = py(Math.min(open, close));
        const body = Math.max(1, py(Math.max(open, close)) - top);
        const kind = dojis.includes(i) ? 'doji' : close < open ? 'up' : 'down';
        paths[kind] += `M${x - 1} ${top}h3v${body}h-3zM${x} ${py(high)}h1V${py(low)}h-1z`;
        open = close;
    }
    Object.keys(paths).forEach(kind => add(svg, 'path', { d: paths[kind], fill: COLORS[kind] }));

    const curve = list => {
        const pts = [];
        for (let i = 0; i < list.length; i += 2) {
            pts.push([Math.round(px(list[i])), list[i + 1] / 3 - c.dy]);
        }
        return columns(pts);
    };
    c.bands.forEach(list => add(svg, 'polyline', {
        points: curve(list).filter((p, i) => i % STEP === 0).map(p => p[0] + ',' + (p[1] + 0.5)).join(' '),
        fill: 'none', stroke: COLORS.band, 'stroke-dasharray': '3 3'
    }));
    Object.keys(c.lines).forEach(name => {
        let d = '';
        let last = null;
        curve(c.lines[name]).forEach(([x, y]) => {
            const from = last === null ? y : Math.min(y, last);
            const to = last === null ? y : Math.max(y, last);
            d += `M${x} ${from - 1}h2V${to + 1}h-2z`;
            last = y;
        });
        add(svg, 'path', { d: d, fill: COLORS[name] });
    });
}

charts.forEach(drawChart);
```
